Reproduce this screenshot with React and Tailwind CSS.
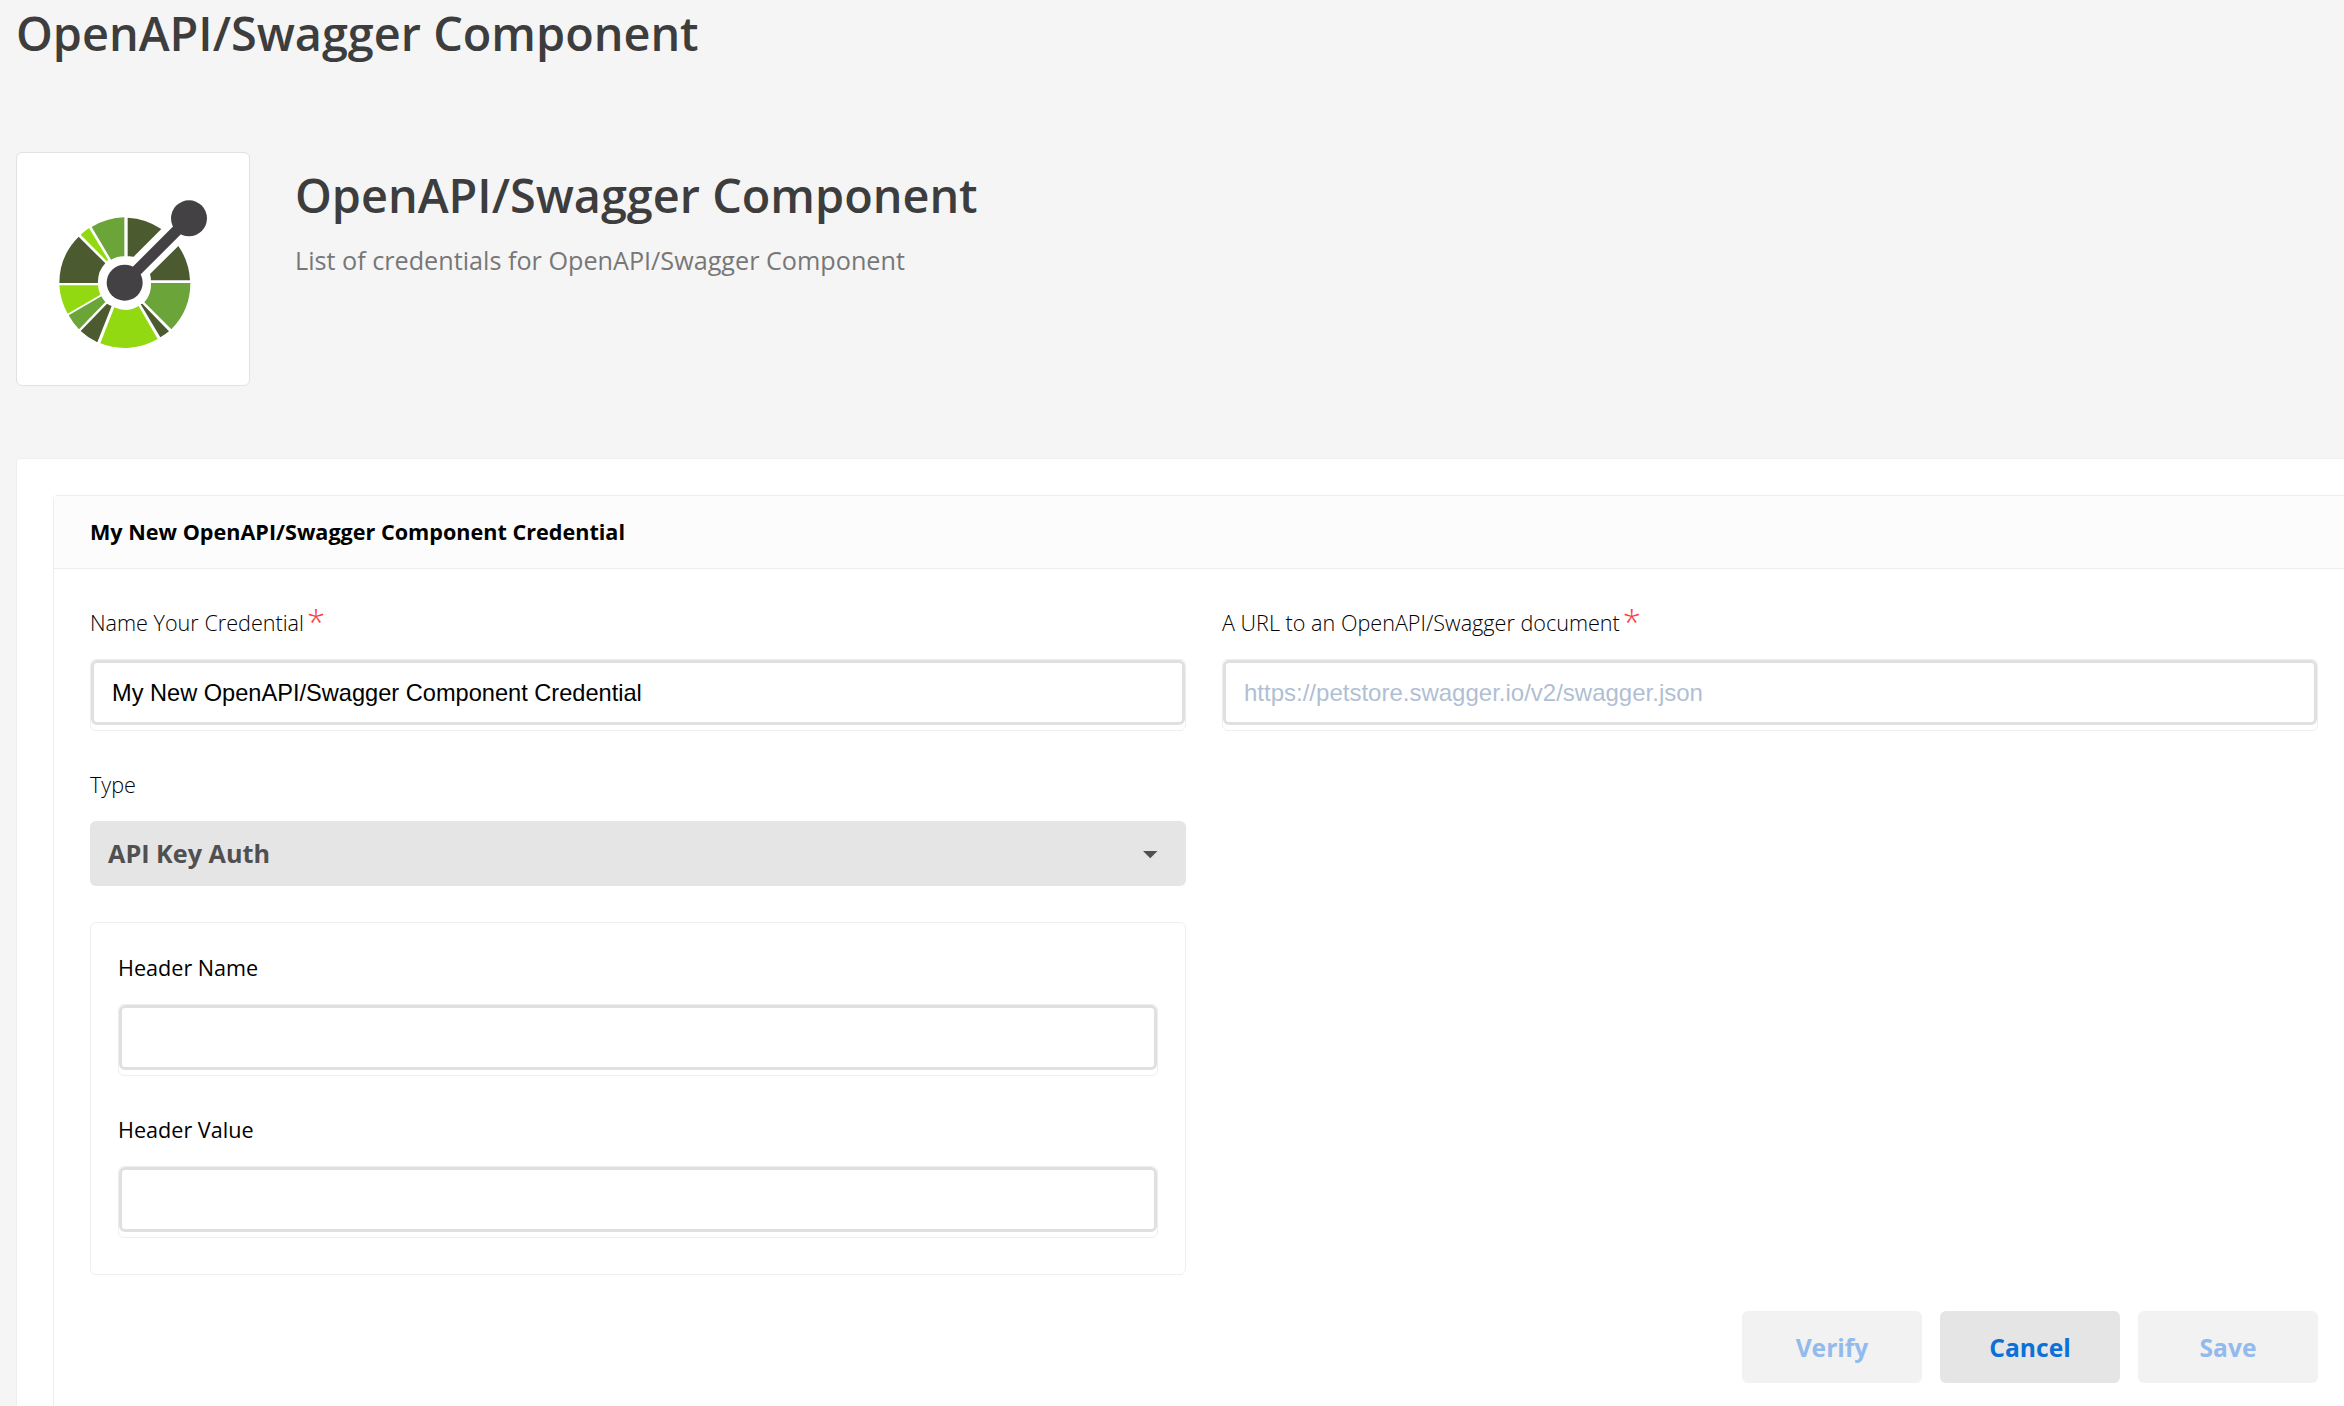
import { useState } from "react";

const DARK = "#4c5b2f";
const GREEN = "#6ba539";
const LIME = "#92d911";

const wedges = [
  { fill: DARK, d: "M383 233A197 197 0 0 1 484 267L401 350A79 79 0 0 0 383 349Z" },
  { fill: DARK, d: "M535 318A197 197 0 0 1 570 421L453 421A79 79 0 0 0 450 402Z" },
  { fill: GREEN, d: "M571 429A197 197 0 0 1 514 568L433 487A79 79 0 0 0 453 429Z" },
  { fill: DARK, d: "M507 574A197 197 0 0 1 481 592L422 493L427 491Z" },
  { fill: LIME, d: "M473 597A197 197 0 0 1 301 610L343 502A79 79 0 0 0 416 498Z" },
  { fill: DARK, d: "M292 607A197 197 0 0 1 242 573L321 491A79 79 0 0 0 335 498Z" },
  { fill: GREEN, d: "M237 568A197 197 0 0 1 206 526L304 469A79 79 0 0 0 316 486Z" },
  { fill: LIME, d: "M203 521A197 197 0 0 1 178 436L294 436A79 79 0 0 0 301 464Z" },
  { fill: DARK, d: "M178 429A197 197 0 0 1 236 290L316 370A79 79 0 0 0 294 429Z" },
  { fill: LIME, d: "M242 284A197 197 0 0 1 267 264L325 360L320 363Z" },
  { fill: GREEN, d: "M275 261A197 197 0 0 1 373 232L373 349A79 79 0 0 0 333 359Z" },
];

function OpenApiLogo() {
  return (
    <svg viewBox="51 39 696 696" className="w-full h-full">
      {wedges.map((w) => (
        <path key={w.d} d={w.d} fill={w.fill} />
      ))}
      <line x1="374" y1="428" x2="567" y2="235" stroke="#434144" strokeWidth="33" />
      <circle cx="374" cy="428" r="54" fill="#434144" />
      <circle cx="567" cy="235" r="54" fill="#434144" />
    </svg>
  );
}

function Label({ children, required, light }) {
  return (
    <label
      className={`flex h-[30px] whitespace-nowrap text-[21.6px] leading-[30px] text-black ${light ? "font-light" : ""}`}
    >
      {children}
      {required && (
        <span className="ml-[3px] text-[33px] leading-[28px] text-[#ff3b3f]">*</span>
      )}
    </label>
  );
}

function TextInput({ value, onChange, placeholder }) {
  return (
    <div className="mt-[21px] h-[72px] rounded-md border border-[#eeeeee]">
      <input
        type="text"
        value={value}
        placeholder={placeholder}
        onChange={(e) => onChange(e.target.value)}
        className="block h-[65px] w-full rounded-md border-3 border-[#e0e0e0] bg-white px-[18px] pt-[2px] font-['Liberation_Sans',Arial,sans-serif] text-[23.6px] text-black outline-none placeholder:text-[24px] placeholder:text-[#b0bfd3]"
      />
    </div>
  );
}

function Button({ children, primary }) {
  return (
    <button
      type="button"
      disabled={!primary}
      className={`h-[72px] w-[180px] rounded-md pt-[2px] text-[24.6px] font-bold ${
        primary ? "bg-[#e5e5e5] text-[#0b70d7]" : "bg-[#f2f2f2] text-[#93baec]"
      }`}
    >
      {children}
    </button>
  );
}

function App() {
  const [name, setName] = useState("My New OpenAPI/Swagger Component Credential");
  const [url, setUrl] = useState("");
  const [headerName, setHeaderName] = useState("");
  const [headerValue, setHeaderValue] = useState("");

  return (
    <div className="h-screen w-full overflow-hidden bg-[#f5f5f5] px-4 font-['Open_Sans',sans-serif]">
      <h1 className="h-16 text-[46.8px] leading-[67px] font-semibold text-[#3d3d3d]">
        OpenAPI/Swagger Component
      </h1>

      <div className="mt-[88px] flex gap-[45px]">
        <div className="h-[234px] w-[234px] shrink-0 rounded-md border border-[#e2e2e2] bg-white">
          <OpenApiLogo />
        </div>
        <div className="pt-[11px]">
          <h2 className="text-[46.8px] leading-[64px] font-semibold text-[#3d3d3d]">
            OpenAPI/Swagger Component
          </h2>
          <p className="mt-[15px] text-[25.2px] leading-9 text-[#777777]">
            List of credentials for OpenAPI/Swagger Component
          </p>
        </div>
      </div>

      {/* the credentials panel runs past the right edge of the window */}
      <div className="mt-[72px] h-[1000px] w-[2376px] rounded-sm border border-[#eeeeee] bg-white p-9">
        <div className="h-full rounded-sm border border-[#eeeeee]">
          <div className="flex h-[73px] items-center border-b border-[#eeeeee] bg-[#fcfcfc] px-9 text-[21.6px] font-bold text-black">
            My New OpenAPI/Swagger Component Credential
          </div>

          <form className="px-9 pt-[39px]">
            <div className="grid grid-cols-2 gap-x-9">
              <div>
                <Label required light>Name Your Credential</Label>
                <TextInput value={name} onChange={setName} />
              </div>
              <div>
                <Label required light>A URL to an OpenAPI/Swagger document</Label>
                <TextInput
                  value={url}
                  onChange={setUrl}
                  placeholder="https://petstore.swagger.io/v2/swagger.json"
                />
              </div>

              <div className="mt-[39px]">
                <Label light>Type</Label>
                <button
                  type="button"
                  className="mt-[21px] flex h-[65px] w-full items-center justify-between rounded-md bg-[#e5e5e5] pr-[28px] pl-[18px] text-[25.2px] font-bold text-[#505050]"
                >
                  API Key Auth
                  <svg viewBox="0 0 15 8" className="mt-[2px] h-2 w-[15px]" fill="#505050">
                    <path d="M0 0H14.5L7.25 7.25Z" />
                  </svg>
                </button>

                <div className="mt-9 rounded-md border border-[#eeeeee] px-[27px] pt-[30px] pb-9">
                  <Label>Header Name</Label>
                  <TextInput value={headerName} onChange={setHeaderName} />
                  <div className="mt-[39px]">
                    <Label>Header Value</Label>
                    <TextInput value={headerValue} onChange={setHeaderValue} />
                  </div>
                </div>
              </div>
            </div>

            <div className="mt-9 flex justify-end gap-[18px]">
              <Button>Verify</Button>
              <Button primary>Cancel</Button>
              <Button>Save</Button>
            </div>
          </form>
        </div>
      </div>
    </div>
  );
}

export default App;
